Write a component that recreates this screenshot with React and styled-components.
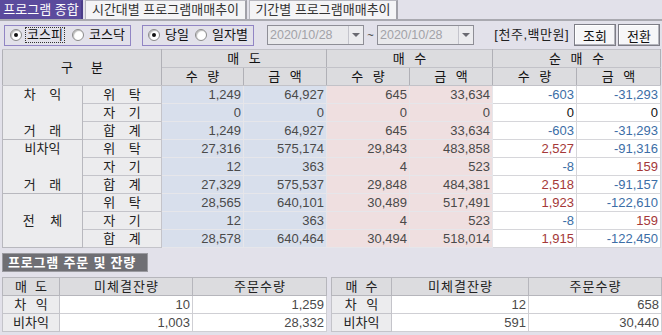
import React from "react";
import styled, { createGlobalStyle } from "styled-components";

const FONT = `"Liberation Sans", "Noto Sans CJK KR", sans-serif`;

const GlobalStyle = createGlobalStyle`
  html, body { margin: 0; padding: 0; background: #e2e1ea; }
  body { font-family: ${FONT}; font-size: 13px; line-height: 14px; color: #222; }
  * { white-space: nowrap; }
`;

const Page = styled.div`
  width: 662px;
  height: 335px;
  overflow: hidden;
  background: #e2e1ea;
`;

// 탭 영역
const TabBar = styled.div`
  display: flex;
  gap: 2px;
  height: 19px;
  border-bottom: 2px solid #a9a9b0;
`;

const Tab = styled.div`
  display: flex;
  align-items: center;
  justify-content: center;
  width: ${(p) => p.$w}px;
  height: 19px;
  box-sizing: border-box;
  font-size: 13px;
  color: ${(p) => (p.$active ? "#fff" : "#333")};
  background: ${(p) => (p.$active ? "#5b4b9d" : "#f4f4f6")};
  border: 1px solid ${(p) => (p.$active ? "#5b4b9d" : "#b8b8c0")};
  border-bottom: none;
  border-right: 2px solid ${(p) => (p.$active ? "#4a3c88" : "#a0a0a8")};
`;

// 조회 조건 영역
const Toolbar = styled.div`
  display: flex;
  align-items: center;
  height: 28px;
  padding: 0 2px 0 4px;
`;

const Group = styled.div`
  display: flex;
  align-items: center;
  justify-content: space-between;
  height: 21px;
  width: ${(p) => p.$w}px;
  flex-shrink: 0;
  box-sizing: border-box;
  padding: 0 4px 0 5px;
  margin-right: ${(p) => p.$mr || 0}px;
  border: 1px solid #9185c4;
`;

const RadioItem = styled.label`
  display: flex;
  align-items: center;
  gap: 4px;
  flex-shrink: 0;
  font-size: 13px;
  color: #111;
`;

const RadioDot = styled.span`
  position: relative;
  flex-shrink: 0;
  width: 10px;
  height: 10px;
  border-radius: 50%;
  background: #fff;
  border: 1px solid #8a8a8a;
  box-shadow: inset 1px 1px 1px #bbb;
  &::after {
    content: "";
    display: ${(p) => (p.$on ? "block" : "none")};
    position: absolute;
    left: 3px;
    top: 3px;
    width: 4px;
    height: 4px;
    border-radius: 50%;
    background: #111;
  }
`;

const RadioText = styled.span`
  padding: 0 1px;
  outline: ${(p) => (p.$focus ? "1px dotted #333" : "none")};
`;

const DateBox = styled.div`
  display: flex;
  flex-shrink: 0;
  width: 97px;
  height: 20px;
  box-sizing: border-box;
  border: 1px solid #8e8e96;
  background: #e9e9ec;
`;

const DateText = styled.div`
  flex: 1;
  display: flex;
  align-items: center;
  padding-left: 2px;
  color: #a2a2a8;
  font-size: 12.5px;
`;

const DropBtn = styled.div`
  width: 14px;
  display: flex;
  align-items: center;
  justify-content: center;
  border-left: 1px solid #c4c4cc;
  background: #ececef;
  &::after {
    content: "";
    border-left: 4px solid transparent;
    border-right: 4px solid transparent;
    border-top: 4px solid #6a6a72;
  }
`;

const Tilde = styled.span`
  width: 13px;
  text-align: center;
  font-size: 11px;
  color: #333;
`;

const Unit = styled.span`
  margin-left: auto;
  margin-right: 3px;
  font-size: 13px;
  letter-spacing: 0.5px;
`;

const Button = styled.button`
  width: 42px;
  height: 22px;
  margin-left: 2px;
  padding: 0;
  font-family: ${FONT};
  font-size: 13px;
  color: #111;
  background: #f6f6f8;
  border: 1px solid #7d7d86;
  box-shadow: inset -1px -1px 0 #b4b4bc, inset 1px 1px 0 #fff;
`;

// 메인 테이블
const Grid = styled.table`
  margin: 0 0 0 2px;
  width: 658px;
  border-collapse: collapse;
  table-layout: fixed;
  border: 1px solid #9a9aa2;
  font-size: 13px;
  line-height: 14px;
`;

const Th = styled.th`
  height: 17px;
  padding: 0;
  font-weight: normal;
  font-size: 13px;
  color: #111;
  background: #dcdcdf;
  border: 1px solid #b0b0b6;
  border-color: #c2c2c8 #b0b0b6;
`;

const GroupCell = styled.td`
  padding: 0;
  background: #ececee;
  border: 1px solid #b8b8be;
  border-top: 1px solid #9a9aa2;
  vertical-align: top;
`;

const GroupLabel = styled.div`
  height: 53px;
  display: flex;
  flex-direction: column;
  justify-content: ${(p) => (p.$center ? "center" : "space-between")};
  align-items: center;
  font-size: 13px;
  line-height: 17px;
`;

const Spaced = styled.span`
  letter-spacing: ${(p) => p.$ls}px;
  margin-right: -${(p) => p.$ls}px;
`;

const SubCell = styled.td`
  height: 17px;
  padding: 0;
  text-align: center;
  font-size: 13px;
  background: #ececee;
  border: 1px solid #c4c4ca;
  border-top: ${(p) => (p.$first ? "1px solid #9a9aa2" : "1px solid #c4c4ca")};
`;

const palette = {
  sell: "#d8dfec",
  buy: "#efdfe0",
  net: "#ffffff",
};

const NumCell = styled.td`
  height: 17px;
  padding: 0 2px 0 0;
  text-align: right;
  font-size: 13px;
  background: ${(p) => palette[p.$kind]};
  color: ${(p) => p.$color || "#4a4a4a"};
  border: 1px solid ${(p) => (p.$kind === "net" ? "#d6d6da" : "#e6e6ea")};
  border-top: ${(p) => (p.$first ? "1px solid #9a9aa2" : undefined)};
  border-left: ${(p) => (p.$edge ? "1px solid #b8b8be" : undefined)};
`;

// 하단 영역
const SectionTitle = styled.div`
  display: flex;
  align-items: center;
  margin: 5px 0 0 2px;
  height: 19px;
  padding: 0 5px;
  width: 146px;
  box-sizing: border-box;
  background: #6f6f74;
  border: 1px solid #9a9aa0;
  color: #fff;
  font-weight: bold;
  font-size: 13px;
  letter-spacing: 0.8px;
`;

const BottomRow = styled.div`
  display: flex;
  gap: 4px;
  margin: 5px 0 0 2px;
`;

const SmallTable = styled.table`
  width: ${(p) => p.$w}px;
  border-collapse: collapse;
  table-layout: fixed;
  border: 1px solid #9a9aa2;
  line-height: 14px;
`;

const SmallTh = styled.th`
  height: 17px;
  padding: 0;
  font-weight: normal;
  font-size: 13px;
  background: #dcdcdf;
  border: 1px solid #b6b6bc;
`;

const SmallLabel = styled.td`
  height: 17px;
  padding: 0;
  text-align: center;
  font-size: 13px;
  background: #ececee;
  border: 1px solid #c4c4ca;
`;

const SmallNum = styled.td`
  padding: 0 2px 0 0;
  text-align: right;
  font-size: 13px;
  color: #4a4a4a;
  background: #fff;
  border: 1px solid #cfcfd4;
`;

const groups = [
  {
    top: "차 익",
    bottom: "거 래",
    rows: [
      ["위 탁", "1,249", "64,927", "645", "33,634", "-603", "-31,293"],
      ["자 기", "0", "0", "0", "0", "0", "0"],
      ["합 계", "1,249", "64,927", "645", "33,634", "-603", "-31,293"],
    ],
  },
  {
    top: "비차익",
    bottom: "거 래",
    tight: true,
    rows: [
      ["위 탁", "27,316", "575,174", "29,843", "483,858", "2,527", "-91,316"],
      ["자 기", "12", "363", "4", "523", "-8", "159"],
      ["합 계", "27,329", "575,537", "29,848", "484,381", "2,518", "-91,157"],
    ],
  },
  {
    center: "전 체",
    rows: [
      ["위 탁", "28,565", "640,101", "30,489", "517,491", "1,923", "-122,610"],
      ["자 기", "12", "363", "4", "523", "-8", "159"],
      ["합 계", "28,578", "640,464", "30,494", "518,014", "1,915", "-122,450"],
    ],
  },
];

const netColor = (v) => {
  if (v === "0") return "#111";
  return v.startsWith("-") ? "#3c6ea6" : "#a43838";
};

const Radio = ({ on, focus, children }) => (
  <RadioItem>
    <RadioDot $on={on} />
    <RadioText $focus={focus}>{children}</RadioText>
  </RadioItem>
);

const OrderTable = ({ side, rows, w, cols }) => (
  <SmallTable $w={w}>
    <colgroup>
      {cols.map((c, i) => (
        <col key={i} style={{ width: c }} />
      ))}
    </colgroup>
    <thead>
      <tr>
        <SmallTh>
          <Spaced $ls={8}>{side}</Spaced>
        </SmallTh>
        <SmallTh>
          <Spaced $ls={1}>미체결잔량</Spaced>
        </SmallTh>
        <SmallTh>
          <Spaced $ls={1}>주문수량</Spaced>
        </SmallTh>
      </tr>
    </thead>
    <tbody>
      {rows.map((r) => (
        <tr key={r[0]}>
          <SmallLabel>
            <Spaced $ls={r[0] === "차 익" ? 3 : 0}>{r[0]}</Spaced>
          </SmallLabel>
          <SmallNum>{r[1]}</SmallNum>
          <SmallNum>{r[2]}</SmallNum>
        </tr>
      ))}
    </tbody>
  </SmallTable>
);

export default function App() {
  return (
    <Page>
      <GlobalStyle />
      <TabBar>
        <Tab $active $w={83}>프로그램 종합</Tab>
        <Tab $w={162}>시간대별 프로그램매매추이</Tab>
        <Tab $w={149}>기간별 프로그램매매추이</Tab>
      </TabBar>

      <Toolbar>
        <Group $w={127} $mr={11}>
          <Radio on focus>코스피</Radio>
          <Radio>코스닥</Radio>
        </Group>
        <Group $w={112} $mr={13}>
          <Radio on>당일</Radio>
          <Radio>일자별</Radio>
        </Group>
        <DateBox>
          <DateText>2020/10/28</DateText>
          <DropBtn />
        </DateBox>
        <Tilde>~</Tilde>
        <DateBox>
          <DateText>2020/10/28</DateText>
          <DropBtn />
        </DateBox>
        <Unit>[천주,백만원]</Unit>
        <Button>조회</Button>
        <Button>전환</Button>
      </Toolbar>

      <Grid>
        <colgroup>
          {[80, 79, 82, 83, 83, 83, 84, 84].map((w, i) => (
            <col key={i} style={{ width: w }} />
          ))}
        </colgroup>
        <thead>
          <tr>
            <Th colSpan={2} rowSpan={2}>
              <Spaced $ls={18}>구분</Spaced>
            </Th>
            <Th colSpan={2}>
              <Spaced $ls={3}>매 도</Spaced>
            </Th>
            <Th colSpan={2}>
              <Spaced $ls={3}>매 수</Spaced>
            </Th>
            <Th colSpan={2}>
              <Spaced $ls={3}>순 매 수</Spaced>
            </Th>
          </tr>
          <tr>
            {["수 량", "금 액", "수 량", "금 액", "수 량", "금 액"].map((t, i) => (
              <Th key={i}>
                <Spaced $ls={3}>{t}</Spaced>
              </Th>
            ))}
          </tr>
        </thead>
        <tbody>
          {groups.map((g, gi) =>
            g.rows.map((r, ri) => (
              <tr key={`${gi}-${ri}`}>
                {ri === 0 && (
                  <GroupCell rowSpan={3}>
                    <GroupLabel $center={!!g.center}>
                      {g.center ? (
                        <Spaced $ls={6}>{g.center}</Spaced>
                      ) : (
                        <>
                          <Spaced $ls={g.tight ? 0 : 5}>{g.top}</Spaced>
                          <Spaced $ls={5}>{g.bottom}</Spaced>
                        </>
                      )}
                    </GroupLabel>
                  </GroupCell>
                )}
                <SubCell $first={ri === 0}>
                  <Spaced $ls={5}>{r[0]}</Spaced>
                </SubCell>
                <NumCell $kind="sell" $first={ri === 0} $edge>
                  {r[1]}
                </NumCell>
                <NumCell $kind="sell" $first={ri === 0}>
                  {r[2]}
                </NumCell>
                <NumCell $kind="buy" $first={ri === 0} $edge>
                  {r[3]}
                </NumCell>
                <NumCell $kind="buy" $first={ri === 0}>
                  {r[4]}
                </NumCell>
                <NumCell
                  $kind="net"
                  $first={ri === 0}
                  $edge
                  $color={netColor(r[5])}
                >
                  {r[5]}
                </NumCell>
                <NumCell $kind="net" $first={ri === 0} $color={netColor(r[6])}>
                  {r[6]}
                </NumCell>
              </tr>
            ))
          )}
        </tbody>
      </Grid>

      <SectionTitle>프로그램 주문 및 잔량</SectionTitle>

      <BottomRow>
        <OrderTable
          side="매도"
          w={324}
          cols={[57, 133, 134]}
          rows={[
            ["차 익", "10", "1,259"],
            ["비차익", "1,003", "28,332"],
          ]}
        />
        <OrderTable
          side="매수"
          w={330}
          cols={[60, 137, 133]}
          rows={[
            ["차 익", "12", "658"],
            ["비차익", "591", "30,440"],
          ]}
        />
      </BottomRow>
    </Page>
  );
}
